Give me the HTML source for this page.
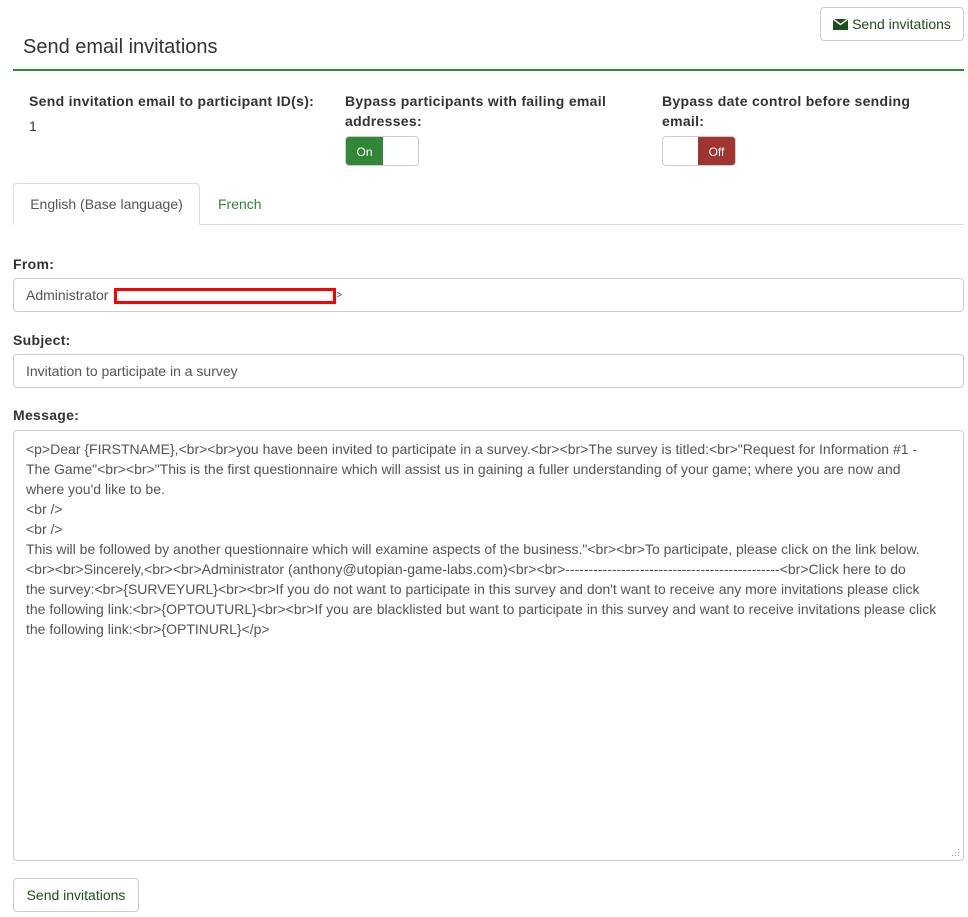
<!DOCTYPE html>
<html><head><meta charset="utf-8"><style>
*{box-sizing:border-box;margin:0;padding:0}
body{width:968px;height:917px;background:#fff;font-family:"Liberation Sans",Arial,sans-serif;color:#333;position:relative;overflow:hidden}
.abs{position:absolute}
.btn{position:absolute;border:1px solid #ccc;border-radius:4px;background:#fff;color:#1e4d1e;font-size:14px;display:flex;align-items:center;justify-content:center}
.lbl{position:absolute;font-weight:bold;font-size:14px;color:#333;line-height:20px;letter-spacing:0.3px}
.inp{position:absolute;left:13px;width:951px;border:1px solid #ccc;border-radius:4px;font-size:14px;color:#555;padding-left:12px;display:flex;align-items:center}
.tog{position:absolute;width:74px;height:30px;border:1px solid #ccc;border-radius:4px;overflow:hidden;font-size:12px;color:#fff}
</style></head><body>
<div class="btn" style="left:820px;top:7px;width:144px;height:34px"><svg width="15" height="11" viewBox="0 0 15 11" style="margin-right:4px"><path d="M0 0H15V11H0Z" fill="#1e4d1e"/><path d="M0 0L7.5 5.5L15 0" stroke="#fff" stroke-width="1.5" fill="none"/></svg>Send invitations</div>
<div class="abs" style="left:23px;top:36px;font-size:20px;color:#333">Send email invitations</div>
<div class="abs" style="left:13px;top:69px;width:951px;height:2px;background:#328637"></div>

<div class="lbl" style="left:29px;top:91px">Send invitation email to participant ID(s):</div>
<div class="abs" style="left:29px;top:118px;font-size:14px">1</div>
<div class="lbl" style="left:345px;top:91px;width:290px">Bypass participants with failing email addresses:</div>
<div class="tog" style="left:345px;top:136px"><div style="position:absolute;left:0;top:0;width:37px;height:30px;background:#328637;display:flex;align-items:center;justify-content:center">On</div></div>
<div class="lbl" style="left:662px;top:91px;width:270px">Bypass date control before sending email:</div>
<div class="tog" style="left:662px;top:136px"><div style="position:absolute;right:0;top:0;width:37px;height:30px;background:#a03530;display:flex;align-items:center;justify-content:center">Off</div></div>

<div class="abs" style="left:13px;top:224px;width:951px;height:1px;background:#ddd"></div>
<div class="abs" style="left:13px;top:183px;width:187px;height:42px;border:1px solid #ddd;border-bottom:1px solid #fff;border-radius:4px 4px 0 0;background:#fff;font-size:14px;color:#555;display:flex;align-items:center;justify-content:center">English (Base language)</div>
<div class="abs" style="left:218px;top:196px;font-size:14px;color:#328637">French</div>

<div class="lbl" style="left:13px;top:254px">From:</div>
<div class="inp" style="top:278px;height:34px">Administrator&nbsp;<span style="display:inline-block;width:222px;height:16px;border:3px solid #f00;margin-top:1px;margin-left:2px"></span><span style="font-size:10px">&gt;</span></div>
<div class="lbl" style="left:13px;top:330px">Subject:</div>
<div class="inp" style="top:354px;height:34px">Invitation to participate in a survey</div>
<div class="lbl" style="left:13px;top:405px">Message:</div>
<div class="abs" style="left:13px;top:430px;width:951px;height:431px;border:1px solid #ccc;border-radius:4px;padding:8px 12px;font-size:14px;line-height:20px;color:#555;white-space:nowrap">&lt;p&gt;Dear {FIRSTNAME},&lt;br&gt;&lt;br&gt;you have been invited to participate in a survey.&lt;br&gt;&lt;br&gt;The survey is titled:&lt;br&gt;"Request for Information #1 -<br>The Game"&lt;br&gt;&lt;br&gt;"This is the first questionnaire which will assist us in gaining a fuller understanding of your game; where you are now and<br>where you'd like to be.<br>&lt;br /&gt;<br>&lt;br /&gt;<br>This will be followed by another questionnaire which will examine aspects of the business."&lt;br&gt;&lt;br&gt;To participate, please click on the link below.<br>&lt;br&gt;&lt;br&gt;Sincerely,&lt;br&gt;&lt;br&gt;Administrator (anthony@utopian-game-labs.com)&lt;br&gt;&lt;br&gt;----------------------------------------------&lt;br&gt;Click here to do<br>the survey:&lt;br&gt;{SURVEYURL}&lt;br&gt;&lt;br&gt;If you do not want to participate in this survey and don't want to receive any more invitations please click<br>the following link:&lt;br&gt;{OPTOUTURL}&lt;br&gt;&lt;br&gt;If you are blacklisted but want to participate in this survey and want to receive invitations please click<br>the following link:&lt;br&gt;{OPTINURL}&lt;/p&gt;
<svg class="abs" style="right:3px;bottom:3px" width="8" height="8"><g fill="#999"><rect x="6" y="0" width="1" height="1"/><rect x="3" y="3" width="1" height="1"/><rect x="6" y="3" width="1" height="1"/><rect x="0" y="6" width="1" height="1"/><rect x="3" y="6" width="1" height="1"/><rect x="6" y="6" width="1" height="1"/></g></svg></div>

<div class="btn" style="left:13px;top:878px;width:126px;height:34px">Send invitations</div>
</body></html>
